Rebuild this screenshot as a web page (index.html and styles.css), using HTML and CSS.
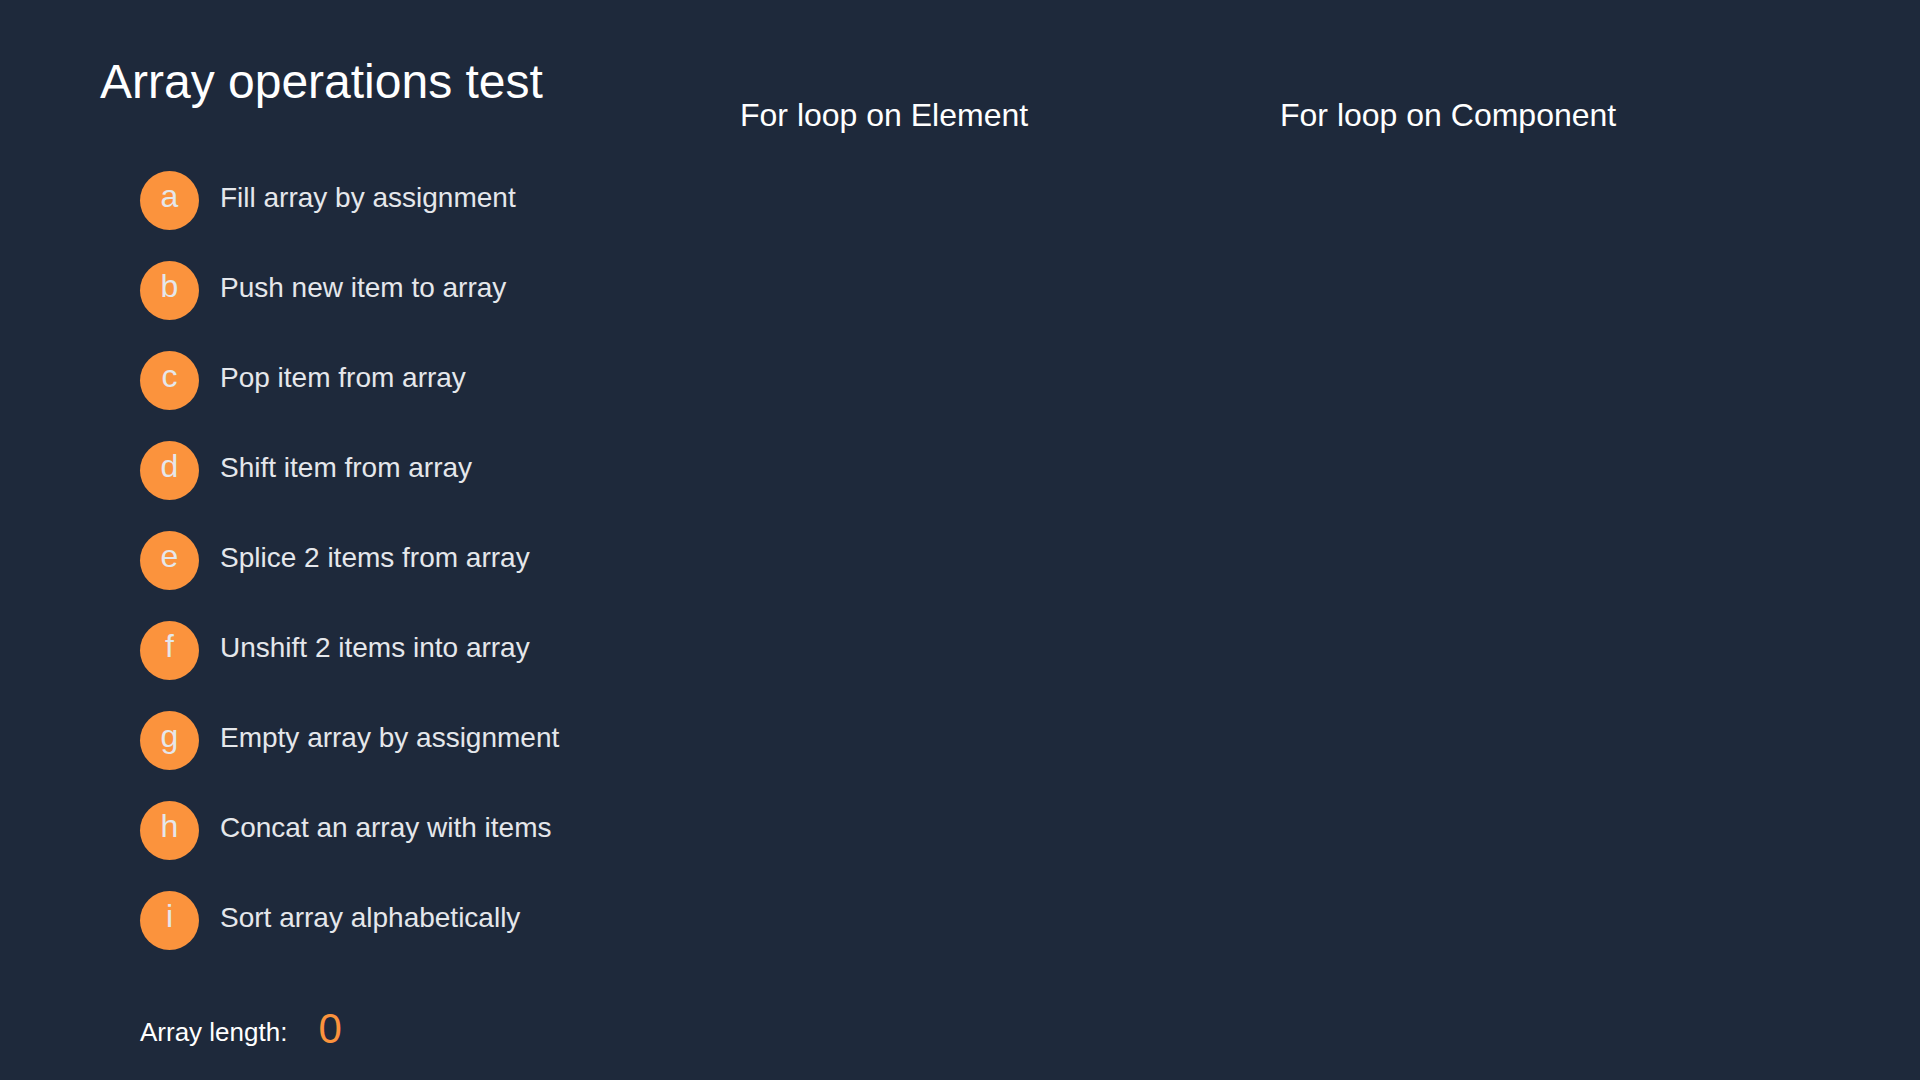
FILE: index.html
```html
<!DOCTYPE html>
<html lang="en">
<head>
<meta charset="utf-8">
<title>Array operations test</title>
<link rel="stylesheet" href="styles.css">
</head>
<body>
<main class="page">
  <section class="col col-ops">
    <h1 class="title">Array operations test</h1>
    <ul class="ops">
      <li class="op"><span class="key">a</span><span class="label">Fill array by assignment</span></li>
      <li class="op"><span class="key">b</span><span class="label">Push new item to array</span></li>
      <li class="op"><span class="key">c</span><span class="label">Pop item from array</span></li>
      <li class="op"><span class="key">d</span><span class="label">Shift item from array</span></li>
      <li class="op"><span class="key">e</span><span class="label">Splice 2 items from array</span></li>
      <li class="op"><span class="key">f</span><span class="label">Unshift 2 items into array</span></li>
      <li class="op"><span class="key">g</span><span class="label">Empty array by assignment</span></li>
      <li class="op"><span class="key">h</span><span class="label">Concat an array with items</span></li>
      <li class="op"><span class="key">i</span><span class="label">Sort array alphabetically</span></li>
    </ul>
    <div class="length">
      <span class="length-label">Array length:</span>
      <span class="length-value">0</span>
    </div>
  </section>
  <section class="col col-list">
    <h2 class="col-title">For loop on Element</h2>
  </section>
  <section class="col col-list">
    <h2 class="col-title">For loop on Component</h2>
  </section>
</main>
</body>
</html>
```
FILE: styles.css
```css
html, body {
  margin: 0;
  padding: 0;
  height: 100%;
}
body {
  background: #1e293b;
  color: #e5e7eb;
  font-family: "Liberation Sans", Arial, sans-serif;
  overflow: hidden;
}
.page {
  display: flex;
  align-items: flex-start;
  padding: 54px 0 0 100px;
  box-sizing: border-box;
  height: 100%;
}
.col-ops {
  width: 640px;
  display: flex;
  flex-direction: column;
}
.col-list {
  width: 540px;
  padding-top: 43px;
}
.title {
  margin: 0;
  font-size: 48px;
  line-height: 56px;
  font-weight: 400;
  color: #ffffff;
}
.col-title {
  margin: 0;
  font-size: 32px;
  line-height: 37px;
  font-weight: 400;
  color: #ffffff;
}
.ops {
  list-style: none;
  margin: 61px 0 0 40px;
  padding: 0;
  display: flex;
  flex-direction: column;
  gap: 31px;
}
.op {
  display: flex;
  align-items: center;
  gap: 21px;
  height: 59px;
}
.key {
  width: 59px;
  height: 59px;
  border-radius: 50%;
  background: #fb933d;
  color: #e5e7eb;
  font-size: 32px;
  line-height: 37px;
  display: flex;
  align-items: center;
  justify-content: center;
  box-sizing: border-box;
  padding-bottom: 9px;
  flex: none;
}
.label {
  font-size: 28px;
  line-height: 32px;
  padding-bottom: 5px;
  color: #e5e7eb;
}
.length {
  display: flex;
  align-items: flex-end;
  gap: 31px;
  margin: 55px 0 0 40px;
}
.length-label {
  font-size: 26px;
  line-height: 30px;
  padding-bottom: 6px;
  color: #ffffff;
}
.length-value {
  font-size: 42px;
  line-height: 48px;
  color: #fb933d;
}
```
